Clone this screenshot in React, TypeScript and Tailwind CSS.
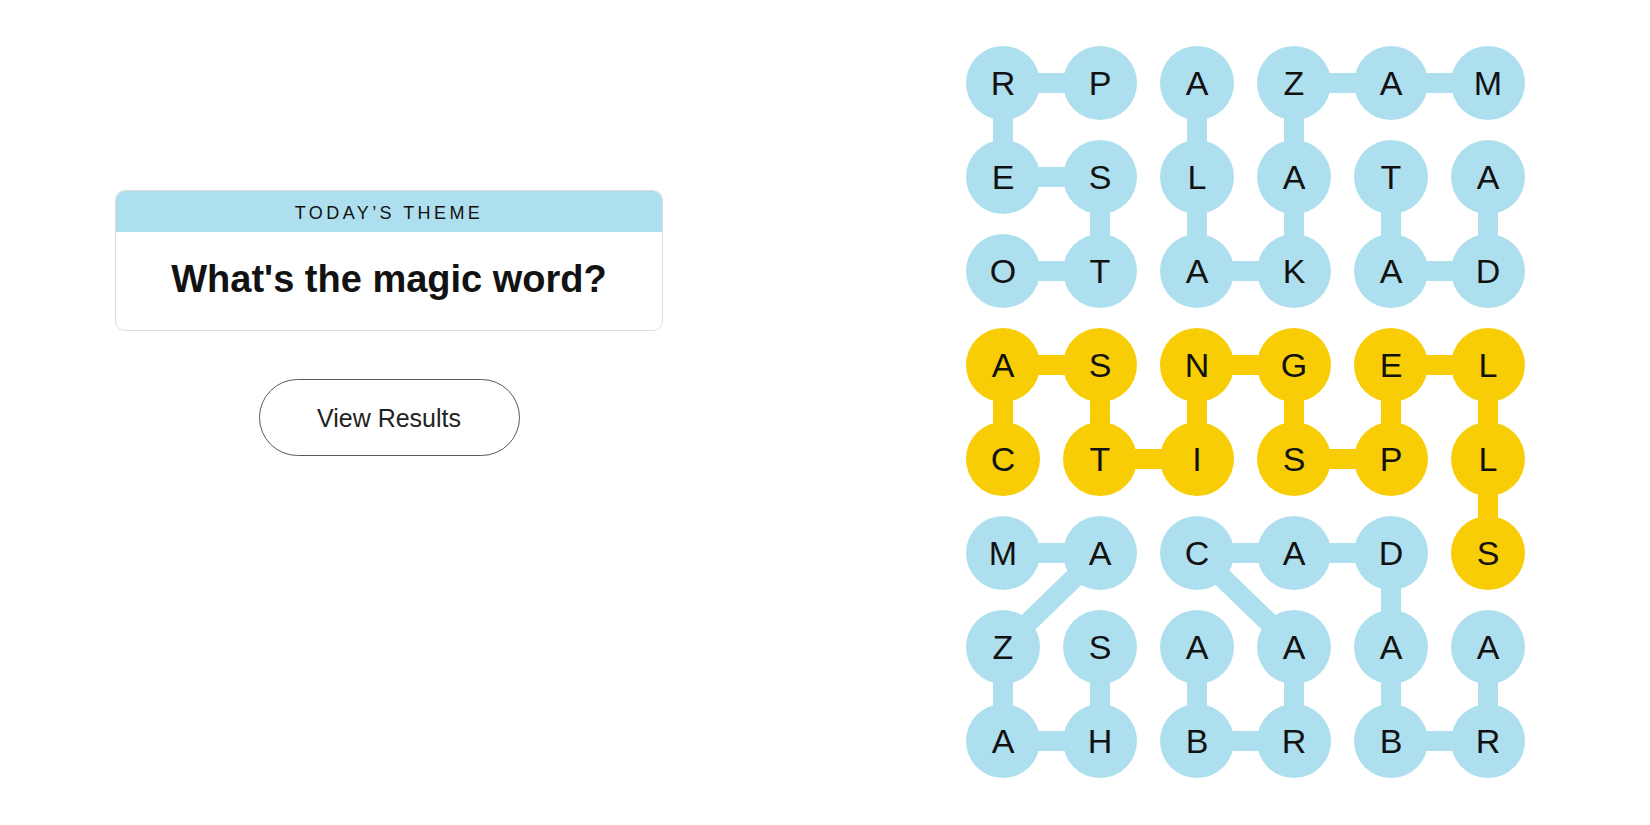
import React from "react";

const ROWS = [
  "RPAZAM",
  "ESLATA",
  "OTAKAD",
  "ASNGEL",
  "CTISPL",
  "MACADS",
  "ZSAAAA",
  "AHBRBR",
];

const BLUE = "#aedfee";
const YELLOW = "#f8cd05";

// cells that belong to the spangram
const spangram: [number, number][] = [
  [4, 0], [3, 0], [3, 1], [4, 1], [4, 2], [3, 2], [3, 3],
  [4, 3], [4, 4], [3, 4], [3, 5], [4, 5], [5, 5],
];

// found words as paths of [row, col]
const words: [number, number][][] = [
  [[0, 1], [0, 0], [1, 0], [1, 1], [2, 1], [2, 0]], // PRESTO
  [[0, 2], [1, 2], [2, 2], [2, 3], [1, 3], [0, 3], [0, 4], [0, 5]], // ALAKAZAM
  [[1, 4], [2, 4], [2, 5], [1, 5]], // TADA
  [[6, 1], [7, 1], [7, 0], [6, 0], [5, 1], [5, 0]], // SHAZAM
  [[6, 2], [7, 2], [7, 3], [6, 3], [5, 2], [5, 3], [5, 4], [6, 4], [7, 4], [7, 5], [6, 5]], // ABRACADABRA
];

const CELL = 74;
const PITCH_X = 97;
const PITCH_Y = 94;

const isSpan = (r: number, c: number) => spangram.some(([a, b]) => a === r && b === c);

function Connectors() {
  const lines: { x1: number; y1: number; x2: number; y2: number; color: string }[] = [];
  const push = (path: [number, number][], color: string) => {
    for (let i = 0; i < path.length - 1; i++) {
      const [r1, c1] = path[i];
      const [r2, c2] = path[i + 1];
      lines.push({
        x1: CELL / 2 + c1 * PITCH_X,
        y1: CELL / 2 + r1 * PITCH_Y,
        x2: CELL / 2 + c2 * PITCH_X,
        y2: CELL / 2 + r2 * PITCH_Y,
        color,
      });
    }
  };
  words.forEach((w) => push(w, BLUE));
  push(spangram, YELLOW);

  return (
    <svg className="absolute inset-0 h-full w-full" width="559" height="732">
      {lines.map((l, i) => (
        <line key={i} x1={l.x1} y1={l.y1} x2={l.x2} y2={l.y2} stroke={l.color} strokeWidth={20} />
      ))}
    </svg>
  );
}

function Board() {
  return (
    <div className="relative w-[559px]">
      <Connectors />
      <div className="relative grid grid-cols-6 gap-x-[23px] gap-y-[20px]">
        {ROWS.map((row, r) =>
          row.split("").map((ch, c) => (
            <div
              key={`${r}-${c}`}
              className={`flex h-[74px] w-[74px] items-center justify-center rounded-full text-[34px] leading-none text-[#121212] ${
                isSpan(r, c) ? "bg-[#f8cd05]" : "bg-[#aedfee]"
              }`}
            >
              {ch}
            </div>
          ))
        )}
      </div>
    </div>
  );
}

export default function App() {
  return (
    <div className="flex min-h-[825px] w-full bg-white font-['Liberation_Sans',Arial,sans-serif]">
      {/* Left: theme + results */}
      <div className="ml-[115px] flex w-[548px] shrink-0 flex-col items-center pt-[190px]">
        <div className="w-full overflow-hidden rounded-[10px] border border-[#dcdcdc]">
          <div className="flex h-[41px] items-center justify-center bg-[#aedfee] pt-[3px] text-[18px] tracking-[0.19em] text-[#121212]">
            TODAY’S THEME
          </div>
          <div className="flex h-[98px] items-center justify-center pb-[4px] text-[38px] font-bold text-[#121212]">
            What's the magic word?
          </div>
        </div>

        <button className="mt-[48px] flex h-[77px] w-[261px] items-center justify-center rounded-full border border-[#5a5a5a] bg-white pt-[3px] text-[25px] text-[#222]">
          View Results
        </button>
      </div>

      {/* Right: board */}
      <div className="ml-[303px] pt-[46px]">
        <Board />
      </div>
    </div>
  );
}
